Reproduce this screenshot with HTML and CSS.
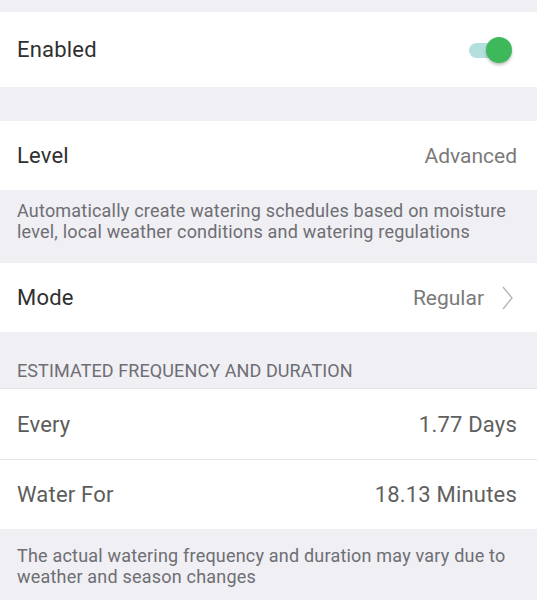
FILE: index.html
```html
<!DOCTYPE html>
<html lang="en">

<head>
    <meta charset="UTF-8">
    <meta name="viewport" content="width=device-width, initial-scale=1.0">
    <title>Smart Watering</title>
    <link rel="stylesheet" href="styles.css">
</head>

<body>

    <div class="spacer spacer-top"></div>

    <div class="row row-enabled">
        <span class="title">Enabled</span>
        <span class="switch on">
            <span class="track"></span>
            <span class="thumb"></span>
        </span>
    </div>

    <div class="spacer spacer-mid"></div>

    <div class="row">
        <span class="title">Level</span>
        <span class="value">Advanced</span>
    </div>

    <p class="note note-level">Automatically create watering schedules based on moisture level, local weather conditions and watering regulations</p>

    <div class="row">
        <span class="title">Mode</span>
        <span class="value">Regular
            <svg class="chevron" width="11" height="24" viewBox="0 0 11 24">
                <polyline points="1,1 10,12 1,23" fill="none" stroke="#b4b4b8" stroke-width="1.3"/>
            </svg>
        </span>
    </div>

    <div class="section-header">ESTIMATED FREQUENCY AND DURATION</div>

    <div class="row row-soft divided">
        <span class="title">Every</span>
        <span class="value">1.77 Days</span>
    </div>
    <div class="row row-soft">
        <span class="title">Water For</span>
        <span class="value">18.13 Minutes</span>
    </div>

    <p class="note note-footer">The actual watering frequency and duration may vary due to weather and season changes</p>

</body>

</html>
```

FILE: styles.css
```css
body {
    margin: 0;
    background-color: #efeff4;
    font-family: Roboto, "Noto Sans", Arial, sans-serif;
    letter-spacing: 0.2px;
}

.spacer-top {
    height: 12px;
}

.spacer-mid {
    height: 34px;
}

.row {
    display: flex;
    align-items: center;
    justify-content: space-between;
    height: 69px;
    padding: 0 20px 0 17px;
    background-color: #fff;
}

.row-enabled {
    height: 75px;
}

.divided {
    height: 71px;
    border-bottom: 1px solid #e4e4e8;
    box-sizing: border-box;
}

.title {
    font-size: 22px;
    color: #303030;
}

.value {
    display: flex;
    align-items: center;
    font-size: 21px;
    letter-spacing: 0;
    color: #7a7a7a;
}

.row-soft .title {
    color: #5c5c5c;
}

.row-soft .value {
    font-size: 22px;
    letter-spacing: 0.2px;
    color: #606060;
}

.chevron {
    margin-left: 18px;
    margin-right: 4px;
}

.note {
    margin: 0;
    padding: 10px 20px 0 17px;
    font-size: 18px;
    line-height: 21px;
    color: #6e6e73;
}

.note-level {
    height: 63px;
}

.note-footer {
    padding-top: 16px;
}

.section-header {
    height: 57px;
    padding: 28px 17px 0;
    box-sizing: border-box;
    border-bottom: 1px solid #e4e4e8;
    font-size: 18px;
    letter-spacing: 0.1px;
    color: #6e6e73;
}

.switch {
    position: relative;
    width: 46px;
    height: 28px;
    margin-right: 4px;
}

.track {
    position: absolute;
    left: 2px;
    top: 7px;
    width: 36px;
    height: 15px;
    border-radius: 8px;
    background-color: #b3dfdc;
}

.thumb {
    position: absolute;
    right: 1px;
    top: 1px;
    width: 26px;
    height: 26px;
    border-radius: 50%;
    background-color: #3db85b;
    box-shadow: 0 2px 3px rgba(0, 0, 0, 0.25);
}
```
